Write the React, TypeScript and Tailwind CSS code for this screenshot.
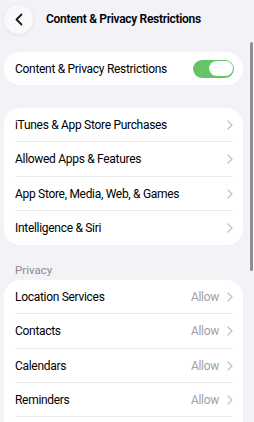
import React from "react"

const font = { fontFamily: "Roboto, 'Noto Sans', sans-serif" }

function Chevron() {
  return (
    <svg width="6" height="10" viewBox="0 0 6 10" fill="none" className="shrink-0">
      <path d="M1 1l4 4-4 4" stroke="#c4c4c7" strokeWidth="1.4" strokeLinecap="round" strokeLinejoin="round" />
    </svg>
  )
}

function Row({ label, value, last }: { label: string; value?: string; last?: boolean }) {
  return (
    <div className="relative flex h-[34.25px] items-center pl-[11px] pr-[10px]">
      <span className="flex-1 text-[12px] tracking-[-0.3px] text-black">{label}</span>
      {value && <span className="mr-[8px] text-[12px] tracking-[-0.3px] text-[#a1a1a6]">{value}</span>}
      <Chevron />
      {!last && <div className="absolute bottom-0 left-[11px] right-[10px] h-px bg-[#ececee]" />}
    </div>
  )
}

export default function App() {
  const general = [
    "iTunes & App Store Purchases",
    "Allowed Apps & Features",
    "App Store, Media, Web, & Games",
    "Intelligence & Siri",
  ]
  const privacy = ["Location Services", "Contacts", "Calendars", "Reminders"]

  return (
    <div className="relative h-[422px] w-[254px] overflow-hidden bg-[#f2f2f7]" style={font}>
      <div className="flex h-[38px] items-center pl-[4px]">
        <button className="flex h-[29px] w-[29px] items-center justify-center rounded-full bg-[#f9f9fb] shadow-[0_1px_4px_rgba(0,0,0,0.08)]">
          <svg width="8" height="13" viewBox="0 0 8 13" fill="none">
            <path d="M6.5 1.5L1.5 6.5l5 5" stroke="#1c1c1e" strokeWidth="1.8" strokeLinecap="round" strokeLinejoin="round" />
          </svg>
        </button>
        <h1 className="ml-[13px] text-[12px] font-semibold tracking-[-0.3px] text-black">
          Content &amp; Privacy Restrictions
        </h1>
      </div>

      <div className="ml-[4px] mt-[14px] w-[239px]">
        <div className="flex h-[33px] items-center rounded-[16px] bg-white pl-[11px] pr-[9px]">
          <span className="flex-1 text-[12px] tracking-[-0.3px] text-black">Content &amp; Privacy Restrictions</span>
          <div className="flex h-[18px] w-[41px] items-center justify-end rounded-full bg-[#65c466] pr-[1.5px]">
            <div className="h-[15px] w-[24px] rounded-full bg-white" />
          </div>
        </div>

        <div className="mt-[23px] overflow-hidden rounded-[16px] bg-white">
          {general.map((g, i) => (
            <Row key={g} label={g} last={i === general.length - 1} />
          ))}
        </div>

        <div className="mb-[3px] mt-[18px] pl-[11px] text-[11.5px] leading-[14px] text-[#8a8a8e]">Privacy</div>

        <div className="rounded-t-[16px] bg-white pb-[20px]">
          {privacy.map((p) => (
            <Row key={p} label={p} value="Allow" />
          ))}
        </div>
      </div>

      <div className="absolute left-[250px] top-[42px] h-[229px] w-[2.5px] rounded-full bg-[#8e8e93]" />
    </div>
  )
}
